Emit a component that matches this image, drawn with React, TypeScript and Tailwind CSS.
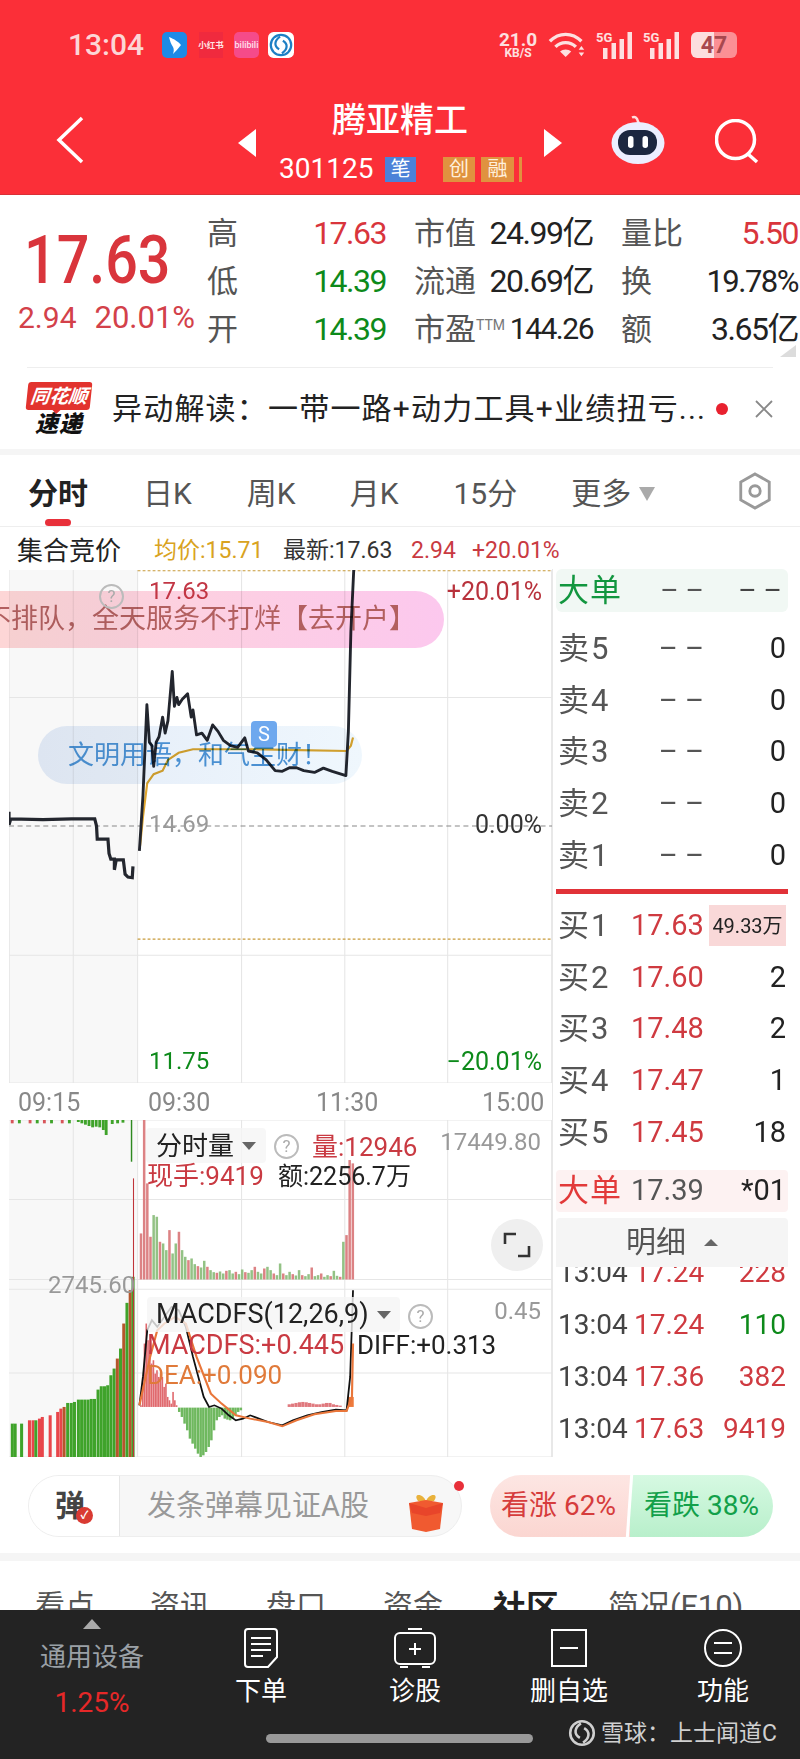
import React from "react";

const FONT = 'Roboto, "Noto Sans CJK SC", sans-serif';

// ---- chart data, in crop coordinates of the reference ----
const PRE_LINE =
  "25,705 25,742 30,725 120,727 200,725 265,725 270,745 272,782 302,782 305,822 310,838 320,838 320,868 325,840 345,840 350,880 358,888 370,890 372,858";
const MAIN_LINE =
  "390,815 400,660 411,405 418,510 425,520 430,578 437,510 445,495 455,440 462,485 470,450 482,312 488,410 495,385 500,405 510,390 525,375 535,440 540,420 550,490 565,485 580,505 595,462 610,480 625,505 645,520 665,525 685,498 695,535 720,540 745,560 770,590 790,592 810,582 830,582 850,590 880,595 905,583 930,592 968,604 975,480 982,200 990,28";
const AVG_LINE =
  "392,800 400,720 412,625 430,600 455,590 470,560 500,540 540,530 600,530 700,530 800,532 970,535 982,520 988,497";
const DIFF_LINE =
  "390,885 400,800 412,660 425,630 440,650 460,620 480,590 500,600 520,650 540,740 570,860 585,890 600,885 620,895 640,915 660,930 680,925 700,915 750,935 790,945 820,930 860,915 900,905 940,898 970,900 980,800 988,540";
const DEA_LINE =
  "390,885 420,740 440,660 460,640 490,620 520,640 550,740 590,850 620,880 660,915 700,925 750,935 790,948 830,930 880,912 940,902 970,902 985,860 988,700";

const PRE_BARS: [number, number, string][] = [
  [30, 940, "g"], [38, 940, "g"], [56, 940, "g"], [78, 930, "r"], [88, 930, "r"], [96, 930, "g"], [106, 925, "r"], [114, 920, "r"],
  [136, 915, "r"], [157, 905, "r"], [166, 895, "r"], [175, 890, "o"], [185, 878, "g"], [195, 878, "g"], [204, 875, "g"],
  [215, 868, "g"], [224, 868, "g"], [233, 868, "g"], [242, 868, "g"], [251, 866, "g"], [260, 866, "g"], [270, 838, "g"],
  [279, 828, "g"], [288, 828, "g"], [297, 825, "g"], [306, 795, "g"], [315, 775, "g"], [324, 745, "o"], [333, 715, "g"],
  [342, 640, "o"], [351, 578, "g"], [360, 540, "o"], [368, 500, "g"],
];
const VOL_TOPS = [
  370, 30, 220, 380, 315, 320, 395, 400, 420, 360, 430, 400, 365, 420, 440, 450, 445, 462, 468, 472, 452, 470, 480, 486, 488, 484,
  490, 482, 480, 490, 485, 492, 478, 486, 488, 480, 470, 485, 490, 475, 470, 480, 490, 495, 460, 490, 495, 485, 492, 496, 480, 495,
  498, 492, 472, 498, 495, 490, 500, 495, 498, 482, 497, 500, 395, 375, 150, 160,
];
const MACD_UP = [885, 800, 700, 640, 690, 720, 760, 750, 790, 780, 800, 790, 800, 830, 820, 860, 870, 880, 845, 870, 885];
const MACD_DOWN = [905, 920, 940, 960, 985, 1000, 1015, 1030, 1040, 1035, 1025, 1010, 990, 960, 930, 920, 915, 925, 928, 930, 925, 915, 905, 900];
const MACD_LOW = [882, 880, 878, 876, 875, 876, 878, 880, 882, 882, 880, 878, 878, 882, 884, 886];

const barColor: Record<string, string> = { g: "#3fa32a", r: "#e8454a", o: "#b5562b" };

function Help({ className }: { className: string }) {
  return (
    <span className={`absolute flex h-[25px] w-[25px] items-center justify-center rounded-full border-2 border-[#bbb] text-[17px] leading-none text-[#aaa] ${className}`}>
      ?
    </span>
  );
}

function MainChart() {
  return (
    <div className="relative h-[513px] w-[552px]">
      <svg viewBox="25 28 1520 1437" preserveAspectRatio="none" className="ml-[9px] block h-[513px] w-[543px]">
        <rect x="25" y="28" width="360" height="1437" fill="#f8f8f8" />
        {[205, 385, 676, 965, 1253, 1544].map((x) => (
          <line key={x} x1={x} x2={x} y1="28" y2="1465" stroke="#e6e6e6" strokeWidth="3" />
        ))}
        <line x1="25" x2="26" y1="28" y2="1465" stroke="#e6e6e6" strokeWidth="3" />
        {[385, 1107, 1465].map((y) => (
          <line key={y} x1="25" x2="1545" y1={y} y2={y} stroke="#e6e6e6" strokeWidth="3" />
        ))}
        <line x1="25" x2="1545" y1="745" y2="745" stroke="#888" strokeWidth="3" strokeDasharray="14 10" />
        <line x1="385" x2="1545" y1="30" y2="30" stroke="#c79a3a" strokeWidth="3" strokeDasharray="8 6" />
        <line x1="385" x2="1545" y1="1062" y2="1062" stroke="#c79a3a" strokeWidth="3" strokeDasharray="8 6" />
        <polyline points={PRE_LINE} fill="none" stroke="#23262e" strokeWidth="9" />
        <polyline points={AVG_LINE} fill="none" stroke="#dfa52e" strokeWidth="6" />
        <polyline points={MAIN_LINE} fill="none" stroke="#23262e" strokeWidth="8" strokeLinejoin="round" />
      </svg>

      {/* danmaku banners over the chart */}
      <div className="absolute left-0 top-[21px] flex h-[57px] w-[444px] items-center justify-end overflow-hidden rounded-r-full bg-gradient-to-r from-[#fdd6d6] to-[#fcc8ee] pr-[28px] text-[27px] text-[#b25f5f] mix-blend-multiply">
        <span className="whitespace-nowrap">不排队，全天服务不打烊【去开户】</span>
      </div>
      <div className="absolute left-[38px] top-[156px] flex h-[58px] w-[324px] items-center rounded-full bg-gradient-to-r from-[#e4ecf8] to-[#eff7fd] pl-[30px] text-[26px] text-[#4a90d2] mix-blend-multiply">
        文明用语，和气生财！
      </div>
      <span className="absolute left-[251px] top-[151px] flex h-[26px] w-[26px] items-center justify-center rounded-[4px] bg-[#6ea8ee] text-[20px] leading-none text-white">S</span>
      <Help className="left-[99px] top-[14px]" />

      <span className="absolute left-[149px] top-[21px] -translate-y-1/2 text-[24px] leading-none text-[#c23644]">17.63</span>
      <span className="absolute right-[10px] top-[21px] -translate-y-1/2 text-[25px] leading-none text-[#b8323c]">+20.01%</span>
      <span className="absolute left-[149px] top-[254px] -translate-y-1/2 text-[24px] leading-none text-[#999]">14.69</span>
      <span className="absolute right-[10px] top-[254px] -translate-y-1/2 text-[25px] leading-none text-[#333]">0.00%</span>
      <span className="absolute left-[149px] top-[491px] -translate-y-1/2 text-[24px] leading-none text-[#0d8a1a]">11.75</span>
      <span className="absolute right-[10px] top-[491px] -translate-y-1/2 text-[25px] leading-none text-[#0d8a1a]">−20.01%</span>
    </div>
  );
}

function TimeAxis() {
  return (
    <div className="relative h-[37px] w-[552px] pt-px text-[25px] leading-[37px] text-[#888]">
      <span className="absolute left-[18px]">09:15</span>
      <span className="absolute left-[148px]">09:30</span>
      <span className="absolute left-[316px]">11:30</span>
      <span className="absolute left-[482px]">15:00</span>
    </div>
  );
}

function IndicatorPanels() {
  return (
    <div className="relative h-[337px] w-[552px]">
      <svg viewBox="25 30 1520 1010" preserveAspectRatio="none" className="ml-[9px] block h-[337px] w-[543px]">
        <rect x="25" y="30" width="360" height="1010" fill="#f8f8f8" />
        {[205, 385, 676, 965, 1253, 1544].map((x) => (
          <line key={x} x1={x} x2={x} y1="30" y2="1040" stroke="#e6e6e6" strokeWidth="3" />
        ))}
        {[30, 268, 508, 537, 788, 1040].map((y) => (
          <line key={y} x1="25" x2="1545" y1={y} y2={y} stroke="#e6e6e6" strokeWidth="3" />
        ))}

        {/* pre-market bars */}
        {PRE_BARS.map(([x, y, c]) => (
          <rect key={x} x={x} y={y} width="8.500" height={1040 - y} fill={barColor[c]} />
        ))}
        {[30, 50, 80, 100, 120, 140, 170, 190].map((x, i) => (
          <rect key={x} x={x} y="30" width="8" height="10" fill={i % 2 ? "#3fa32a" : "#d8555a"} />
        ))}
        {[215, 225, 235, 245, 255, 265, 275, 285, 293, 310, 325, 340].map((x, i) => (
          <rect key={x} x={x} y="30" width="8" height={[6, 10, 14, 18, 22, 20, 22, 30, 45, 12, 10, 8][i]} fill="#3fa32a" />
        ))}
        <rect x="366" y="30" width="4" height="125" fill="#2f8a20" />
        <rect x="372" y="205" width="3" height="835" fill="#c0343a" />

        {/* volume */}
        {VOL_TOPS.map((top, i) => {
          const x = 391 + i * 8.85;
          const red = i < 4 || i % 3 === 0 || i > 64;
          return <rect key={i} x={x} y={top} width="7" height={508 - top} fill={red ? "#dc8284" : "#93c285"} />;
        })}

        {/* macd histogram */}
        {MACD_UP.map((top, i) => (
          <rect key={i} x={392 + i * 5} y={top} width="4.500" height={890 - top} fill="#e0696e" />
        ))}
        {MACD_DOWN.map((bottom, i) => (
          <rect key={i} x={498 + i * 7.5} y="892" width="7" height={bottom - 892} fill="#6fb85f" />
        ))}
        {MACD_LOW.map((top, i) => (
          <rect key={i} x={805 + i * 9.5} y={top} width="9" height={890 - top} fill="#e0797e" />
        ))}
        <rect x="972" y="860" width="18" height="30" fill="#ee7a3c" />
        <polyline points={DIFF_LINE} fill="none" stroke="#111" strokeWidth="5" />
        <polyline points={DEA_LINE} fill="none" stroke="#e9763a" strokeWidth="6" />
      </svg>

      {/* volume legend */}
      <div className="absolute left-[146px] top-[8px] flex h-[35px] w-[120px] items-center rounded-[4px] bg-[#f5f5f5]/80 pl-[10px] text-[26px] leading-none text-[#222]">
        分时量
        <span className="ml-[8px] h-0 w-0 border-x-[7px] border-t-[8px] border-x-transparent border-t-[#666]" />
      </div>
      <Help className="left-[274px] top-[14px]" />
      <span className="absolute left-[312px] top-[27px] -translate-y-1/2 text-[26px] leading-none text-[#c93a42]">量:12946</span>
      <span className="absolute right-[11px] top-[22px] -translate-y-1/2 text-[24px] leading-none text-[#999]">17449.80</span>
      <span className="absolute left-[147px] top-[56px] -translate-y-1/2 text-[26px] leading-none text-[#c93a42]">现手:9419</span>
      <span className="absolute left-[278px] top-[56px] -translate-y-1/2 text-[25px] leading-none text-[#222]">额:2256.7万</span>

      <span className="absolute left-[491px] top-[99px] flex h-[52px] w-[52px] items-center justify-center rounded-full bg-[#efefef]">
        <svg viewBox="0 0 28 28" className="h-[28px] w-[28px]" fill="none" stroke="#333" strokeWidth="2.600">
          <path d="M2 13V3h11M26 15v10H15" />
        </svg>
      </span>
      <span className="absolute left-[48px] top-[165px] -translate-y-1/2 text-[24px] leading-none text-[#999]">2745.60</span>

      {/* macd legend */}
      <div className="absolute left-[147px] top-[177px] flex h-[35px] w-[253px] items-center rounded-[4px] bg-[#f5f5f5]/80 pl-[9px] text-[27px] leading-none text-[#222]">
        MACDFS(12,26,9)
        <span className="ml-[8px] h-0 w-0 border-x-[7px] border-t-[8px] border-x-transparent border-t-[#666]" />
      </div>
      <Help className="left-[408px] top-[184px]" />
      <span className="absolute right-[11px] top-[191px] -translate-y-1/2 text-[24px] leading-none text-[#999]">0.45</span>
      <span className="absolute left-[147px] top-[225px] -translate-y-1/2 whitespace-nowrap text-[27px] leading-none text-[#c93a42]">MACDFS:+0.445</span>
      <span className="absolute left-[357px] top-[225px] -translate-y-1/2 text-[26px] leading-none text-[#222]">DIFF:+0.313</span>
      <span className="absolute left-[147px] top-[255px] -translate-y-1/2 text-[26px] leading-none text-[#e07a3a]">DEA:+0.090</span>
    </div>
  );
}

function BookRow({ label, price, qty, priceCls, qtyBox }: { label: string; price: string; qty: string; priceCls: string; qtyBox?: boolean }) {
  return (
    <div className="flex h-[51.6px] items-center text-[29px] leading-none">
      <span className="w-[75px] pl-[2px] text-[31px] tracking-[2px] text-[#555]">{label}</span>
      <span className={`w-[75px] ${priceCls}`}>{price}</span>
      {qtyBox ? (
        <span className="ml-[3px] flex h-[41px] w-[77px] items-center justify-center whitespace-nowrap bg-[#f9d8d8] text-[20px] text-[#222]">{qty}</span>
      ) : (
        <span className="w-[80px] text-right text-[#222]">{qty}</span>
      )}
    </div>
  );
}

function TickRow({ price, qty, qtyCls }: { price: string; qty: string; qtyCls: string }) {
  return (
    <div className="flex h-[52px] shrink-0 items-center text-[28px] leading-none">
      <span className="w-[78px] pl-[2px] text-[#444]">13:04</span>
      <span className="w-[72px] text-[#cf3a40]">{price}</span>
      <span className={`w-[80px] text-right ${qtyCls}`}>{qty}</span>
    </div>
  );
}

function OrderBook() {
  return (
    <div className="flex h-[888px] w-[248px] flex-col border-l border-[#e8e8e8] pl-[3px] pr-[12px]">
      <div className="flex h-[43px] shrink-0 items-center rounded-[6px] bg-[#f1f8f4] text-[28px] leading-none">
        <span className="w-[75px] pl-[2px] text-[31px] tracking-[1px] text-[#12963f]">大单</span>
        <span className="w-[75px] pr-[2px] text-right text-[#555]">– –</span>
        <span className="w-[80px] pr-[4px] text-right text-[#444]">– –</span>
      </div>
      <div className="mt-[11px]">
        {["卖5", "卖4", "卖3", "卖2", "卖1"].map((l) => (
          <BookRow key={l} label={l} price="– –" qty="0" priceCls="pr-[2px] text-right text-[#555]" />
        ))}
      </div>
      <div className="mt-[8px] h-[5px] shrink-0 bg-[#e13238]" />
      <div className="mt-[6px]">
        <BookRow label="买1" price="17.63" qty="49.33万" priceCls="text-[#cf3a40]" qtyBox />
        <BookRow label="买2" price="17.60" qty="2" priceCls="text-[#cf3a40]" />
        <BookRow label="买3" price="17.48" qty="2" priceCls="text-[#cf3a40]" />
        <BookRow label="买4" price="17.47" qty="1" priceCls="text-[#cf3a40]" />
        <BookRow label="买5" price="17.45" qty="18" priceCls="text-[#cf3a40]" />
      </div>
      <div className="mt-[12px] flex h-[42px] shrink-0 items-center rounded-[4px] bg-[#fdf2f2] text-[29px] leading-none">
        <span className="w-[75px] pl-[2px] text-[31px] tracking-[1px] text-[#e23a3a]">大单</span>
        <span className="w-[75px] text-[#555]">17.39</span>
        <span className="w-[80px] text-right text-[#222]">*01</span>
      </div>
      <div className="mt-[6px] flex h-[49px] shrink-0 items-center justify-center rounded-t-[4px] bg-[#f5f5f5] text-[30px] leading-none text-[#555]">
        明细
        <span className="ml-[18px] h-0 w-0 border-x-[7px] border-b-[7px] border-x-transparent border-b-[#666]" />
      </div>
      <div className="min-h-0 flex-1 overflow-hidden">
        <div className="-mt-[20px]">
          <TickRow price="17.24" qty="228" qtyCls="text-[#cf3a40]" />
          <TickRow price="17.24" qty="110" qtyCls="text-[#0d8a1a]" />
          <TickRow price="17.36" qty="382" qtyCls="text-[#cf3a40]" />
          <TickRow price="17.63" qty="9419" qtyCls="text-[#cf3a40]" />
        </div>
      </div>
    </div>
  );
}

function SnowLogo({ size, color, bg }: { size: number; color: string; bg?: string }) {
  return (
    <svg viewBox="0 0 28 28" width={size} height={size} fill="none" stroke={color} strokeWidth="2.400">
      {bg && <rect width="28" height="28" rx="6" fill={bg} stroke="none" />}
      <circle cx="14" cy="14" r="11" />
      <path d="M13 5C7 9 6 15 12 18.500M15 23c6-4 7-10 1-13.500" />
    </svg>
  );
}

function StatusBar() {
  return (
    <div className="relative flex h-[88px] items-center pl-[68px] pt-[2px]">
      <span className="w-[94px] text-[30px] font-medium leading-none text-[#fcd6d6]">13:04</span>
      <svg viewBox="0 0 25 26" className="h-[26px] w-[25px]">
        <rect width="25" height="26" rx="5" fill="#1d8ae6" />
        <path d="M7 5c5 2 10 5 12 8-3 4-6 7-8 9 1-3 1-5 0-7-2-3-3-6-4-10z" fill="#fff" />
      </svg>
      <span className="ml-[12px] flex h-[26px] w-[24px] items-center justify-center whitespace-nowrap bg-[#f02a3e] text-[8.500px] font-bold leading-none text-[#ffe5e5]">小红书</span>
      <span className="ml-[11px] flex h-[26px] w-[25px] items-center justify-center overflow-hidden rounded-[5px] bg-[#f54b8a] text-[9px] font-medium leading-none text-[#ffe0ea]">bilibili</span>
      <span className="ml-[9px]">
        <SnowLogo size={26} color="#1d7fc4" bg="#fff" />
      </span>

      <div className="absolute left-[499px] top-[31px] flex w-[38px] flex-col items-center text-[#fde0e0]">
        <span className="text-[19px] font-bold leading-[17px]">21.0</span>
        <span className="text-[12px] font-bold leading-[11px]">KB/S</span>
      </div>
      <svg viewBox="0 0 40 28" className="absolute left-[548px] top-[32px] h-[26px] w-[39px]" fill="none" stroke="#fde0e0" strokeWidth="3.600">
        <path d="M1 10c10-10 24-10 34 0M7 16c6-6 16-6 22 0" />
        <path d="M12 21c3-3 9-3 12 0l-6 6z" fill="#fde0e0" stroke="none" />
        <path d="M35 15l3 4h-6zM35 26l3-4h-6z" fill="#fde0e0" stroke="none" />
      </svg>
      {[596, 643].map((x) => (
        <div key={x} className={`absolute top-[31px] h-[28px] w-[37px] ${x === 596 ? "left-[596px]" : "left-[643px]"}`}>
          <span className="absolute left-0 top-0 text-[13px] font-bold leading-none text-[#fde0e0]">5G</span>
          <svg viewBox="0 0 37 28" className="h-[28px] w-[37px]" fill="#fde0e0">
            <rect x="7" y="17" width="4.500" height="11" />
            <rect x="15.500" y="12" width="4.500" height="16" />
            <rect x="23.500" y="8" width="4.500" height="20" />
            <rect x="31.500" y="1" width="4.500" height="27" />
          </svg>
        </div>
      ))}
      <div className="absolute left-[691px] top-[32px] flex h-[26px] w-[46px] items-center justify-center overflow-hidden rounded-[6px] bg-gradient-to-r from-[#fcdede] from-50% to-[#fb8f94] to-50% text-[23px] font-bold leading-none text-[#a8484e]">
        47
      </div>
    </div>
  );
}

function NavBar() {
  return (
    <div className="relative flex h-[106px] flex-col items-center text-white">
      <svg viewBox="0 0 28 48" className="absolute left-[56px] top-[28px] h-[48px] w-[28px]" fill="none" stroke="#fff" strokeWidth="3.500">
        <path d="M26 2 3 24l23 22" />
      </svg>
      <span className="absolute left-[238px] top-[41px] h-0 w-0 border-y-[14px] border-r-[18px] border-y-transparent border-r-white" />
      <span className="absolute left-[544px] top-[41px] h-0 w-0 border-y-[14px] border-l-[18px] border-y-transparent border-l-white" />
      <span className="mt-[15px] text-[34px] font-medium leading-none">腾亚精工</span>
      <div className="absolute left-[279px] top-[68px] flex items-center">
        <span className="w-[106px] text-[28px] leading-[26px]">301125</span>
        <span className="flex h-[25px] w-[31px] items-center justify-center bg-[#4c82d8] text-[20px] leading-none">笔</span>
        <span className="ml-[27px] flex h-[25px] w-[32px] items-center justify-center bg-[#e0923f] text-[20px] leading-none text-[#fff0dc]">创</span>
        <span className="ml-[6px] flex h-[25px] w-[33px] items-center justify-center bg-[#e0923f] text-[20px] leading-none text-[#fff0dc]">融</span>
        <span className="ml-[5px] h-[25px] w-[3px] bg-[#e0923f]" />
      </div>
      <svg viewBox="0 0 54 50" className="absolute left-[611px] top-[27px] h-[50px] w-[54px]">
        <path d="M21 2.500c3-1.500 5 0 6 4l1 2" fill="none" stroke="#ffdede" strokeWidth="2.500" />
        <ellipse cx="27" cy="28" rx="26.500" ry="21" fill="#eceeff" />
        <rect x="7" y="15" width="39" height="25" rx="12" fill="#1c2740" />
        <rect x="17" y="21" width="5.500" height="12" rx="2.700" fill="#fff" />
        <rect x="31.500" y="21" width="5.500" height="12" rx="2.700" fill="#fff" />
      </svg>
      <svg viewBox="0 0 46 46" className="absolute left-[715px] top-[31px] h-[46px] w-[46px]" fill="none" stroke="#fff" strokeWidth="3.500">
        <circle cx="20.500" cy="20.500" r="19" />
        <path d="M33 35l9 8" />
      </svg>
    </div>
  );
}

function QuoteCell({ label, value, cls, className = "w-[177px]" }: { label: React.ReactNode; value: string; cls: string; className?: string }) {
  return (
    <div className={`flex items-center justify-between ${className}`}>
      <span className="whitespace-nowrap text-[31px] text-[#555]">{label}</span>
      <span className={`whitespace-nowrap tracking-[-1.500px] ${cls}`}>{value}</span>
    </div>
  );
}

function QuoteRow({ children }: { children: React.ReactNode }) {
  return <div className="flex h-[48px] items-center gap-[28px] leading-none">{children}</div>;
}

function Quote() {
  const ttm = (
    <>
      市盈<sup className="-top-[10px] text-[14px] text-[#777]">TTM</sup>
    </>
  );
  return (
    <div className="relative flex h-[172px] pt-[14px]">
      <div className="w-[207px] pl-[24px] pt-[24px] text-[#d9353c]">
        <div className="origin-left scale-x-[0.87] text-[66px] font-medium leading-[56px]">17.63</div>
        <div className="-ml-[6px] mt-[13px] flex items-center gap-[18px] leading-none text-[#d3414a]">
          <span className="text-[30px]">2.94</span>
          <span className="text-[31px]">20.01%</span>
        </div>
      </div>
      <div>
        <QuoteRow>
          <QuoteCell label="高" value="17.63" cls="text-[32px] text-[#d9353c]" className="w-[179px]" />
          <QuoteCell label="市值" value="24.99亿" cls="text-[32px] text-[#222]" className="w-[179px]" />
          <QuoteCell label="量比" value="5.50" cls="text-[32px] text-[#d9353c]" />
        </QuoteRow>
        <QuoteRow>
          <QuoteCell label="低" value="14.39" cls="text-[32px] text-[#0d8a1a]" className="w-[179px]" />
          <QuoteCell label="流通" value="20.69亿" cls="text-[32px] text-[#222]" className="w-[179px]" />
          <QuoteCell label="换" value="19.78%" cls="text-[31px] text-[#222]" />
        </QuoteRow>
        <QuoteRow>
          <QuoteCell label="开" value="14.39" cls="text-[32px] text-[#0d8a1a]" className="w-[179px]" />
          <QuoteCell label={ttm} value="144.26" cls="text-[30px] text-[#222]" className="w-[179px]" />
          <QuoteCell label="额" value="3.65亿" cls="text-[32px] text-[#222]" />
        </QuoteRow>
      </div>
      <span className="absolute right-[4px] top-[150px] h-0 w-0 border-b-[12px] border-l-[16px] border-b-[#dcdcdc] border-l-transparent" />
    </div>
  );
}

function NewsStrip() {
  return (
    <div className="mx-[27px] flex h-[82px] items-center border-t border-[#eee]">
      <div className="flex w-[64px] shrink-0 flex-col items-center">
        <div className="relative flex h-[28px] w-[64px] -skew-x-6 items-center justify-center rounded-[3px] bg-[#e2332e] text-[19px] font-bold italic leading-none text-white">
          同花顺
          <span className="absolute -bottom-[4px] left-[26px] h-0 w-0 border-x-[5px] border-t-[5px] border-x-transparent border-t-[#e2332e]" />
        </div>
        <span className="mt-[3px] text-[23px] font-black italic leading-none tracking-[1px] text-[#111]">速递</span>
      </div>
      <span className="ml-[21px] whitespace-nowrap text-[30px] leading-none tracking-[1.200px] text-[#222]">异动解读：一带一路+动力工具+业绩扭亏...</span>
      <span className="ml-auto flex items-center gap-[27px]">
        <span className="h-[12px] w-[12px] rounded-full bg-[#e8212f]" />
        <svg viewBox="0 0 18 18" className="h-[18px] w-[18px]" stroke="#888" strokeWidth="1.800">
          <path d="M1 1l16 16M17 1 1 17" />
        </svg>
      </span>
    </div>
  );
}

function PeriodTabs() {
  return (
    <div className="relative flex h-[72px] items-center border-b border-[#eee] pl-[28px] pt-[7px] text-[30px] leading-none text-[#555]">
      <span className="font-bold text-[#222]">分时</span>
      <span className="ml-[55px]">日K</span>
      <span className="ml-[55px]">周K</span>
      <span className="ml-[54px]">月K</span>
      <span className="ml-[55px]">15分</span>
      <span className="ml-[54px]">更多</span>
      <span className="ml-[8px] h-0 w-0 border-x-[8px] border-t-[14px] border-x-transparent border-t-[#aaa]" />
      <svg viewBox="0 0 36 40" className="absolute left-[737px] top-[17px] h-[38px] w-[36px]" fill="none" stroke="#999" strokeWidth="3">
        <path d="M18 2l15 8.500v19L18 38 3 29.500v-19z" />
        <circle cx="18" cy="20" r="5.500" />
      </svg>
      <span className="absolute bottom-0 left-[45px] h-[7px] w-[26px] rounded-full bg-[#e8303a]" />
    </div>
  );
}

function InfoRow() {
  return (
    <div className="flex h-[42px] items-center pt-[5px] text-[23px] leading-none">
      <span className="ml-[17px] w-[137px] text-[26px] text-[#222]">集合竞价</span>
      <span className="w-[129px] text-[#d9a321]">均价:15.71</span>
      <span className="w-[128px] text-[#333]">最新:17.63</span>
      <span className="w-[61px] text-[#c93a42]">2.94</span>
      <span className="text-[#c93a42]">+20.01%</span>
    </div>
  );
}

function CommentBar() {
  return (
    <div className="flex h-[96px] items-start pl-[28px] pt-[18px]">
      <div className="relative flex h-[62px] w-[434px] overflow-visible rounded-full border border-[#eee] bg-[#f7f7f7]">
        <div className="relative flex w-[91px] items-center justify-center rounded-l-full border-r border-[#e6e6e6] bg-white text-[30px] font-bold leading-none text-[#444]">
          <span className="-ml-[8px]">弹</span>
          <span className="absolute left-[47px] top-[31px] flex h-[17px] w-[17px] items-center justify-center rounded-full bg-[#d93a32] text-[11px] leading-none text-white">✓</span>
        </div>
        <span className="ml-[27px] self-center text-[29px] leading-none text-[#999]">发条弹幕见证A股</span>
        <svg viewBox="0 0 36 40" className="absolute left-[379px] top-[17px] h-[40px] w-[36px]">
          <path d="M10 8C4 0 16 0 18 9 20 0 32 0 26 8z" fill="#e9b23c" />
          <path d="M1 10 18 7l17 3-3 26-14 3-14-3z" fill="#f05a30" />
          <path d="M1 10l17 5 17-5-3 10-14 3-14-3z" fill="#e8452a" />
        </svg>
        <span className="absolute left-[425px] top-[5px] h-[10px] w-[10px] rounded-full bg-[#e8303a]" />
      </div>
      <div className="relative ml-[28px] flex h-[62px] w-[283px] overflow-hidden rounded-full text-[28px] leading-none">
        <div className="flex w-[140px] items-center justify-end bg-gradient-to-b from-[#fde6e3] to-[#fbd6d1] pr-[14px] text-[#d63c3c]">看涨 62%</div>
        <div className="flex flex-1 items-center justify-end bg-gradient-to-b from-[#d6f9e2] to-[#b8efcb] pr-[14px] text-[#12a04a]">看跌 38%</div>
        <span className="absolute -top-[2px] left-[138px] h-[66px] w-[3px] skew-x-[-4deg] bg-white" />
      </div>
    </div>
  );
}

function BottomItem({ icon, label }: { icon: React.ReactNode; label: string }) {
  return (
    <div className="flex w-[154px] flex-col items-center pt-[18px] text-white">
      <div className="flex h-[40px] items-center justify-center">{icon}</div>
      <span className="mt-[10px] text-[26px] leading-none">{label}</span>
    </div>
  );
}

function BottomBar() {
  return (
    <div className="relative z-10 flex h-[149px] bg-[#232323]">
      <div className="flex w-[184px] flex-col items-center pt-[9px]">
        <span className="h-0 w-0 border-x-[9px] border-b-[10px] border-x-transparent border-b-[#aaa]" />
        <span className="mt-[15px] text-[26px] leading-none text-[#9aa0a6]">通用设备</span>
        <span className="mt-[19px] text-[28px] leading-none text-[#e62828]">1.25%</span>
      </div>
      <BottomItem
        label="下单"
        icon={
          <svg viewBox="0 0 36 40" className="h-[40px] w-[36px]" fill="none" stroke="#fff" strokeWidth="2">
            <path d="M5 1h26a3 3 0 0 1 3 3v25l-9 10H5a3 3 0 0 1-3-3V4a3 3 0 0 1 3-3zM8 10h20M8 16h20M8 22h20M8 28h12" />
          </svg>
        }
      />
      <BottomItem
        label="诊股"
        icon={
          <svg viewBox="0 0 44 40" className="h-[40px] w-[44px]" fill="none" stroke="#fff" strokeWidth="2">
            <rect x="2" y="5" width="40" height="31" rx="5" />
            <path d="M15 1h14M7 39h8M29 39h8M22 15v12M16 21h12" />
          </svg>
        }
      />
      <BottomItem
        label="删自选"
        icon={
          <svg viewBox="0 0 36 38" className="h-[38px] w-[36px]" fill="none" stroke="#fff" strokeWidth="2">
            <rect x="1" y="1" width="34" height="36" />
            <path d="M9 19h18" />
          </svg>
        }
      />
      <BottomItem
        label="功能"
        icon={
          <svg viewBox="0 0 38 38" className="h-[38px] w-[38px]" fill="none" stroke="#fff" strokeWidth="2">
            <circle cx="19" cy="19" r="18" />
            <path d="M10 14h18M10 24h18" />
          </svg>
        }
      />
      <span className="absolute bottom-[16px] left-[266px] h-[9px] w-[267px] rounded-full bg-[#999]" />
      <div className="absolute left-[567px] top-[108px] flex items-center text-[23px] leading-none text-[#d0d0d0]">
        <SnowLogo size={30} color="#cfcfcf" />
        <span className="ml-[4px] whitespace-nowrap">雪球：上士闻道C</span>
      </div>
    </div>
  );
}

export default function App() {
  return (
    <div className="flex h-[1759px] w-[800px] flex-col overflow-hidden bg-white" style={{ fontFamily: FONT }}>
      <header className="h-[195px] shrink-0 border-b border-[#d93036] bg-[#fb2f38]">
        <StatusBar />
        <NavBar />
      </header>
      <Quote />
      <NewsStrip />
      <div className="h-[6px] shrink-0 bg-[#f5f5f5]" />
      <PeriodTabs />
      <InfoRow />
      <section className="isolate flex h-[888px] shrink-0">
        <div className="w-[552px] pt-px">
          <MainChart />
          <TimeAxis />
          <IndicatorPanels />
        </div>
        <OrderBook />
      </section>
      <CommentBar />
      <div className="h-[8px] shrink-0 bg-[#f5f5f5]" />
      <div className="flex h-[49px] shrink-0 items-start overflow-hidden pl-[35px] pt-[30px] text-[30px] leading-none text-[#555]">
        <span>看点</span>
        <span className="ml-[55px]">资讯</span>
        <span className="ml-[56px]">盘口</span>
        <span className="ml-[57px]">资金</span>
        <span className="ml-[50px] text-[33px] font-bold text-[#222]">社区</span>
        <span className="ml-[49px] text-[31px]">简况(F10)</span>
      </div>
      <BottomBar />
    </div>
  );
}
